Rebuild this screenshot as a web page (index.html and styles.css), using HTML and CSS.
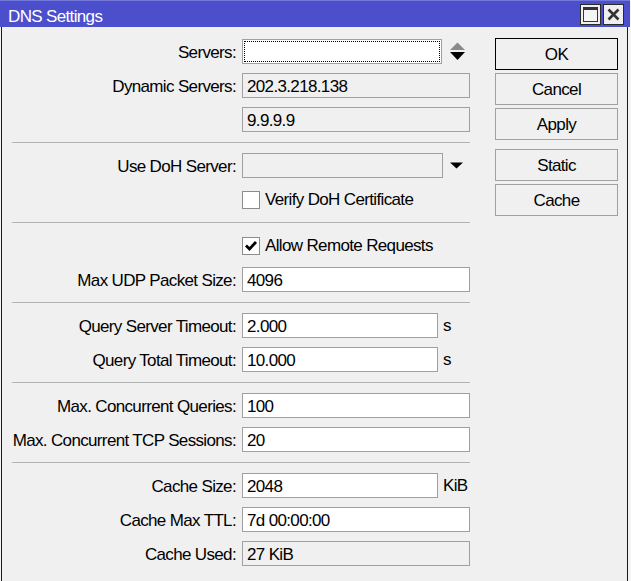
FILE: index.html
```html
<!DOCTYPE html>
<html>
<head>
<meta charset="utf-8">
<link rel="stylesheet" href="styles.css">
</head>
<body>
<div class="titlebar">
  <span class="title">DNS Settings</span>
  <div class="tbtns">
    <div class="tbtn"><span class="maxicon"></span></div>
    <div class="tbtn">
      <svg width="19" height="19" viewBox="0 0 19 19"><path d="M4.5 4.5 L14.5 14.5 M14.5 4.5 L4.5 14.5" stroke="#333" stroke-width="2.6" fill="none"/></svg>
    </div>
  </div>
</div>
<div class="window">
  <div class="form">
    <div class="lbl">Servers:</div>
    <div class="fld">
      <div class="inp srv"><div class="focus"></div></div>
      <svg class="spin" width="16" height="25" viewBox="0 0 16 25"><polygon points="0,11 7.5,3.5 15,11" fill="#8a8a8a"/><polygon points="0,13 15,13 7.5,21" fill="#000"/></svg>
    </div>

    <div class="lbl">Dynamic Servers:</div>
    <div class="fld"><div class="inp ro">202.3.218.138</div></div>

    <div class="lbl"></div>
    <div class="fld"><div class="inp ro">9.9.9.9</div></div>

    <div class="sep"></div>

    <div class="lbl">Use DoH Server:</div>
    <div class="fld">
      <div class="inp ro doh"></div>
      <svg class="drop" width="14" height="25" viewBox="0 0 14 25"><polygon points="0,9.5 13,9.5 6.5,15.5" fill="#000"/></svg>
    </div>

    <div class="lbl"></div>
    <div class="fld"><div class="cb"></div><span class="cbl">Verify DoH Certificate</span></div>

    <div class="sep"></div>

    <div class="lbl"></div>
    <div class="fld"><div class="cb"><svg width="16" height="16" viewBox="0 0 16 16"><path d="M3 7.5 L6.5 11 L13 4" stroke="#000" stroke-width="2.8" fill="none"/></svg></div><span class="cbl">Allow Remote Requests</span></div>

    <div class="lbl">Max UDP Packet Size:</div>
    <div class="fld"><div class="inp">4096</div></div>

    <div class="sep"></div>

    <div class="lbl">Query Server Timeout:</div>
    <div class="fld"><div class="inp short">2.000</div><span class="unit">s</span></div>

    <div class="lbl">Query Total Timeout:</div>
    <div class="fld"><div class="inp short">10.000</div><span class="unit">s</span></div>

    <div class="sep"></div>

    <div class="lbl">Max. Concurrent Queries:</div>
    <div class="fld"><div class="inp">100</div></div>

    <div class="lbl">Max. Concurrent TCP Sessions:</div>
    <div class="fld"><div class="inp">20</div></div>

    <div class="sep"></div>

    <div class="lbl">Cache Size:</div>
    <div class="fld"><div class="inp short">2048</div><span class="unit">KiB</span></div>

    <div class="lbl">Cache Max TTL:</div>
    <div class="fld"><div class="inp">7d 00:00:00</div></div>

    <div class="lbl">Cache Used:</div>
    <div class="fld"><div class="inp ro">27 KiB</div></div>
  </div>
  <div class="buttons">
    <div class="btn def">OK</div>
    <div class="btn">Cancel</div>
    <div class="btn">Apply</div>
    <div class="btn gapped">Static</div>
    <div class="btn">Cache</div>
  </div>
</div>
</body>
</html>
```

FILE: styles.css
```css
html, body {
  margin: 0;
  padding: 0;
  background: #f4f4f4;
}
body {
  width: 631px;
  height: 581px;
  overflow: hidden;
  font-family: "Liberation Sans", Arial, sans-serif;
  font-size: 17px;
  letter-spacing: -0.65px;
  color: #000;
}
.titlebar {
  box-sizing: border-box;
  height: 27px;
  width: 630px;
  background: #4b4fcc;
  border-top: 1px solid #7478da;
  display: flex;
  justify-content: space-between;
  align-items: flex-start;
  padding: 0 6px 0 8px;
}
.title {
  color: #fff;
  line-height: 20px;
  padding-top: 6px;
}
.tbtns {
  display: flex;
  gap: 2px;
  padding-top: 3px;
}
.tbtn {
  box-sizing: border-box;
  width: 21px;
  height: 21px;
  background: #efefef;
  border: 1px solid #2a2a2a;
  display: flex;
  align-items: center;
  justify-content: center;
}
.maxicon {
  box-sizing: border-box;
  width: 15px;
  height: 15px;
  border: 1.5px solid #333;
  border-top: 3px solid #333;
  background: #f4f4f4;
}
.window {
  box-sizing: border-box;
  margin-left: 1px;
  width: 627px;
  height: 554px;
  border-left: 1px solid #1a1a1a;
  border-right: 1px solid #1a1a1a;
  background: #f0f0f0;
  display: flex;
  align-items: flex-start;
  padding: 11px 0 0 10px;
}
.form {
  margin-top: 1px;
  display: grid;
  grid-template-columns: 224px 228px 17px;
  column-gap: 6px;
  row-gap: 9px;
}
.lbl {
  grid-column: 1;
  height: 25px;
  line-height: 27px;
  text-align: right;
  white-space: nowrap;
}
.fld {
  grid-column: 2 / 4;
  height: 25px;
  display: flex;
  align-items: center;
  white-space: nowrap;
}
.sep {
  grid-column: 1 / -1;
  width: 458px;
  height: 1px;
  margin: 1px 0;
  background: #b4b4b4;
}
.inp {
  box-sizing: border-box;
  width: 228px;
  height: 25px;
  border: 1px solid #a0a0a0;
  background: #fff;
  padding-left: 4px;
  line-height: 25px;
  flex: none;
}
.inp.ro {
  background: #f0f0f0;
}
.inp.short {
  width: 196px;
}
.inp.srv {
  width: 200px;
  padding: 1px;
}
.inp.doh {
  width: 201px;
}
.focus {
  box-sizing: border-box;
  height: 100%;
  border: 1px dotted #000;
}
.spin {
  margin-left: 8px;
  flex: none;
}
.drop {
  margin-left: 7px;
  flex: none;
}
.unit {
  margin-left: 5px;
}
.cb {
  box-sizing: border-box;
  width: 18px;
  height: 18px;
  border: 1px solid #8c8c8c;
  background: #fff;
  display: flex;
  align-items: center;
  justify-content: center;
  flex: none;
}
.cbl {
  margin-left: 5px;
}
.buttons {
  margin-left: 2px;
  display: flex;
  flex-direction: column;
}
.btn {
  box-sizing: border-box;
  width: 123px;
  height: 32px;
  margin-bottom: 3px;
  padding-top: 2px;
  border: 1px solid #a0a0a0;
  background: #f0f0f0;
  display: flex;
  align-items: center;
  justify-content: center;
}
.btn.def {
  border-color: #000;
}
.btn.gapped {
  margin-top: 6px;
}
```
